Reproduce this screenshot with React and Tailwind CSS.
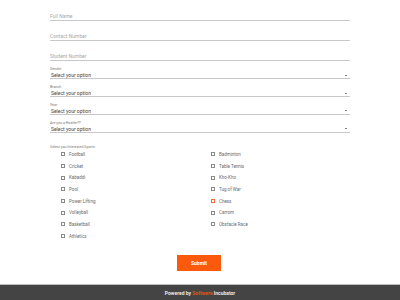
import React from "react";

const inputs = ["Full Name", "Contact Number", "Student Number"];
const selects = [
  { label: "Gender", mt: "mt-[6px]" },
  { label: "Branch", mt: "mt-[6px]" },
  { label: "Year", mt: "mt-[5.5px]" },
  { label: "Are you a Hostler??", mt: "mt-[6px]" },
];
const col1 = ["Football", "Cricket", "Kabaddi", "Pool", "Power Lifting", "Volleyball", "Basketball", "Athletics"];
const col2 = ["Badminton", "Table Tennis", "Kho-Kho", "Tug of War", "Chess", "Carrom", "Obstacle Race"];

function Check({ label, active }) {
  return (
    <div className="h-[11.7px] flex items-center">
      <span
        className={
          "w-[4px] h-[4px] border-[0.6px] box-border shrink-0 " +
          (active ? "border-[#f06a35]" : "border-[#8a8a8a]")
        }
      />
      <span className="ml-[4px] text-[4.5px] leading-[5px] text-[#6a6a6a]">{label}</span>
    </div>
  );
}

export default function App() {
  return (
    <div
      className="w-[400px] h-[300px] flex flex-col bg-white overflow-hidden"
      style={{ fontFamily: "Roboto, 'Liberation Sans', sans-serif" }}
    >
      <div className="px-[50px] pt-[1px] flex flex-col">
        {inputs.map((t) => (
          <div key={t} className="h-[20px] flex items-end border-b border-[#c8c8c8] pb-[1px]">
            <span className="text-[5px] leading-[6px] text-[#a8a8a8]">{t}</span>
          </div>
        ))}
        {selects.map((s) => (
          <div key={s.label} className={s.mt + " flex flex-col"}>
            <span className="text-[3.6px] leading-[4px] text-[#777]">{s.label}</span>
            <div className="mt-[1px] h-[7px] flex items-start justify-between border-b border-[#c8c8c8] pl-[1px] pr-[3px]">
              <span className="text-[5px] leading-[6px] text-[#444]">Select your option</span>
              <span className="mt-[2.5px] w-0 h-0 border-l-[1.2px] border-r-[1.2px] border-t-[1.6px] border-l-transparent border-r-transparent border-t-black" />
            </div>
          </div>
        ))}
        <div className="mt-[12px] text-[3.6px] leading-[4px] text-[#777]">Select you Interested Sports</div>
        <div className="pl-[11px] grid grid-cols-[150px_150px]">
          <div className="flex flex-col">
            {col1.map((c) => (
              <Check key={c} label={c} />
            ))}
          </div>
          <div className="flex flex-col">
            {col2.map((c) => (
              <Check key={c} label={c} active={c === "Chess"} />
            ))}
          </div>
        </div>
        <div className="mt-[13px] flex justify-center">
          <button className="w-[44px] h-[16px] ml-[-2px] bg-[#fb5a0c] text-white text-[5px] font-bold leading-[6px] flex items-center justify-center">
            Submit
          </button>
        </div>
      </div>
      <div className="mt-auto h-[16px] bg-[#444] border-t border-[#bdbdbd] flex items-center justify-center">
        <span className="text-[5px] leading-[6px] font-bold text-[#e8e8e8]">
          Powered by <span className="text-[#e0541e]">Softwere</span> Incubator
        </span>
      </div>
    </div>
  );
}
